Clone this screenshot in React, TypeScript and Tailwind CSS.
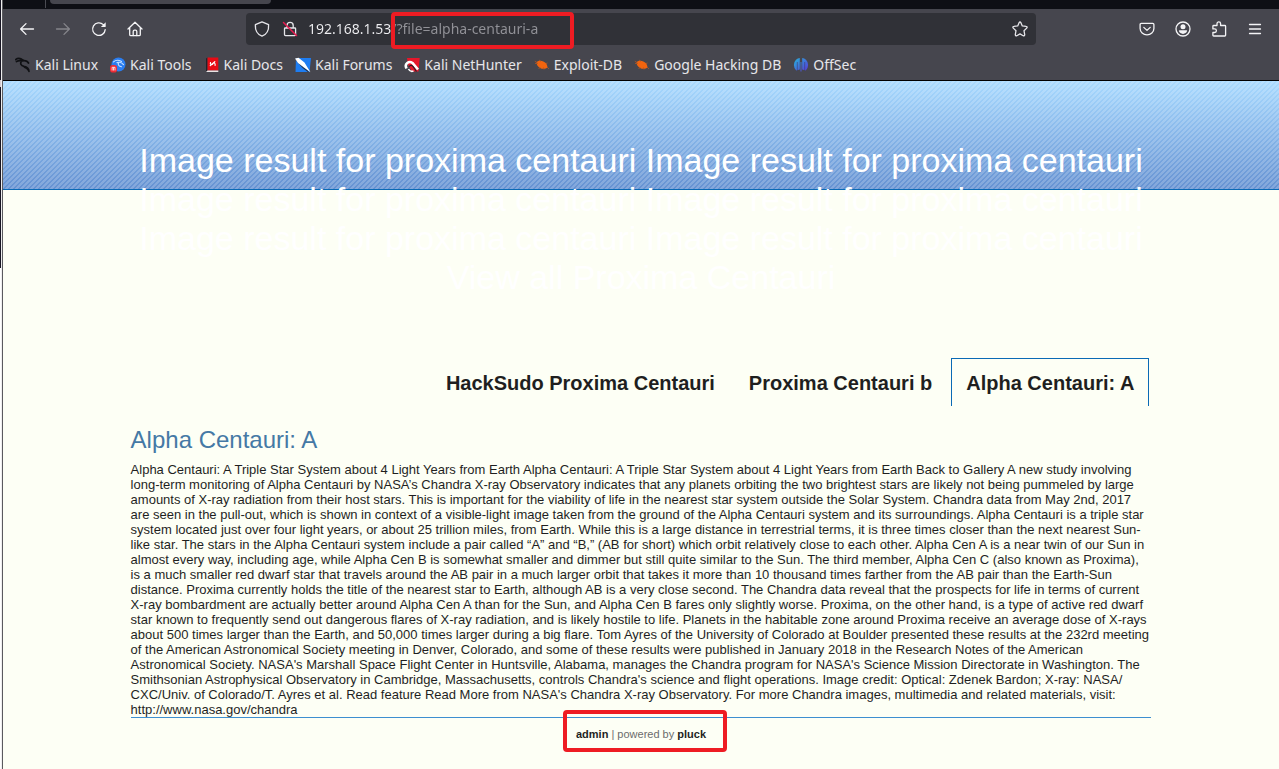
import type { ReactNode } from "react";

const iconProps = {
  width: 16,
  height: 16,
  viewBox: "0 0 16 16",
  fill: "none",
  stroke: "currentColor",
  strokeWidth: 1.3,
  strokeLinecap: "round" as const,
  strokeLinejoin: "round" as const,
  "aria-hidden": true,
};

function ToolButton({ label, dim, children }: { label: string; dim?: boolean; children: ReactNode }) {
  return (
    <button
      type="button"
      aria-label={label}
      disabled={dim}
      className={
        dim
          ? "flex h-8 w-9 shrink-0 items-center justify-center text-[#85858b]"
          : "flex h-8 w-9 shrink-0 items-center justify-center text-[#f4f4f6]"
      }
    >
      {children}
    </button>
  );
}

function BackIcon() {
  return (
    <svg {...iconProps}>
      <path d="M14.5 8H1.8M7 2.6 1.6 8 7 13.4" />
    </svg>
  );
}

function ForwardIcon() {
  return (
    <svg {...iconProps}>
      <path d="M1.5 8h12.7M9 2.6 14.4 8 9 13.4" />
    </svg>
  );
}

function ReloadIcon() {
  return (
    <svg {...iconProps}>
      <path d="M14.2 8.6A6.3 6.3 0 1 1 12.3 3.6l1 .9" />
      <path d="M14.7 1.2v4.4a.4.4 0 0 1-.4.4H9.9z" fill="currentColor" stroke="none" />
    </svg>
  );
}

function HomeIcon() {
  return (
    <svg {...iconProps}>
      <path d="M1 8 8 1.2 15 8M2.7 6.6v6.9c0 .7.5 1.2 1.2 1.2h8.2c.7 0 1.2-.5 1.2-1.2V6.6" />
      <path d="M6.2 14.5v-4c0-.8.6-1.3 1.3-1.3h1c.8 0 1.3.5 1.3 1.3v4" />
    </svg>
  );
}

function ShieldIcon() {
  return (
    <svg {...iconProps}>
      <path d="M8 .9 14.6 3.6c.3 4.6-1.2 9.5-6.6 11.6C2.6 13.1 1.1 8.2 1.4 3.6z" />
    </svg>
  );
}

function InsecureLockIcon() {
  return (
    <svg {...iconProps}>
      <path d="M5 7V4.4a3.1 3.1 0 0 1 6.2 0V7M3.2 7h9.6c.5 0 .8.3.8.8v5.8c0 .6-.4 1-1 1H3.5c-.6 0-1-.4-1-1V7.8c0-.5.3-.8.7-.8z" />
      <path d="M1.5 1.5 14.5 14.5" stroke="#e8194f" strokeWidth="1.5" />
    </svg>
  );
}

function StarIcon() {
  return (
    <svg {...iconProps}>
      <path d="M8 1c.4 0 .6.2.8.6l1.5 3.3 3.8.5c1 .1 1.3 1 .6 1.7L12 9.7l.7 3.9c.1.9-.7 1.5-1.5 1.1L8 12.9l-3.2 1.8c-.8.4-1.6-.2-1.5-1.1L4 9.7 1.3 7.1C.6 6.4.9 5.5 1.9 5.4l3.8-.5L7.2 1.6C7.4 1.2 7.6 1 8 1z" />
    </svg>
  );
}

function PocketIcon() {
  return (
    <svg {...iconProps}>
      <path d="M2.3 2.3h11.4c.7 0 1.2.5 1.2 1.2v4a6.9 6.3 0 0 1-13.8 0v-4c0-.7.5-1.2 1.2-1.2z" />
      <path d="M4.8 6.4 8 9.4l3.2-3" />
    </svg>
  );
}

function AccountIcon() {
  return (
    <svg {...iconProps}>
      <circle cx="8" cy="8" r="7" />
      <circle cx="8" cy="5.8" r="2.5" fill="currentColor" stroke="none" />
      <path
        d="M4.6 9.2h6.8c.5 0 .8.4.7.9C11.5 11.8 9.9 12.9 8 12.9s-3.5-1.100-4.100-2.800c-.1-.5.2-.9.7-.9z"
        fill="currentColor"
        stroke="none"
      />
    </svg>
  );
}

function ExtensionIcon() {
  return (
    <svg {...iconProps}>
      <path d="M6 4.500V2.700a1.800 1.800 0 0 1 3.600 0v1.800h4.200c.5 0 .8.300.8.800v8.900c0 .5-.3.800-.8.800H2.700c-.5 0-.8-.3-.8-.8v-2.700h1.700a1.800 1.800 0 0 0 0-3.600H1.900V5.300c0-.5.3-.8.8-.8z" />
    </svg>
  );
}

function MenuIcon() {
  return (
    <svg {...iconProps}>
      <path d="M2.5 3.5h11M2.5 8h11M2.5 12.5h11" />
    </svg>
  );
}

function DragonIcon() {
  return (
    <svg width="16" height="16" viewBox="0 0 16 16" aria-hidden="true">
      <path
        d="M.5 2.600C3 .9 6 1.500 8 3.200M1.500 4.500c2-1 4-1 6.500-.5M7 3.800c3-.6 5.500.2 6.500 2.200M6.500 4C4.800 6.500 6 8.700 9 9.300c3 .5 4.800 1.600 5 5.200M9.500 10.200c2 .6 3 1.500 4 3.200"
        fill="none"
        stroke="#101114"
        strokeWidth="1.7"
        strokeLinecap="round"
      />
    </svg>
  );
}

function ToolsIcon() {
  return (
    <svg width="16" height="16" viewBox="0 0 16 16" aria-hidden="true">
      <circle cx="8.5" cy="7.5" r="7" fill="#2a7df0" />
      <path
        d="M3.5 4.800C6 2.600 9 3 11.500 4.500M7 5.600c2.800-.8 5 0 6.500 2M8.500 5.800c-1 2.500 1 3.500 3 4"
        fill="none"
        stroke="#c6e1ff"
        strokeWidth="1.1"
        strokeLinecap="round"
      />
      <rect x="0" y="8" width="7" height="7.5" rx="2.8" fill="#ef2b35" />
      <path d="M2.100 13.500v-3.200h2.900v3.200M3.500 10.500v3" fill="none" stroke="#fff" strokeWidth=".8" />
    </svg>
  );
}

function DocsIcon() {
  return (
    <svg width="16" height="16" viewBox="0 0 16 16" aria-hidden="true">
      <path d="M2 1.500 3.600.5v13L2 15z" fill="#20242c" />
      <path d="M3.500.5h10.800v13H3.500z" fill="#e80a14" />
      <path d="M3.500 13.500h10.800V15H2z" fill="#e9e5e5" />
      <path
        d="M6.500 5.500c-.8 2 1.700 2.800 2.300 1.200s2.800-1 2.300 1.600M6.300 8.500l4.500-3.800"
        fill="none"
        stroke="#fff"
        strokeWidth="1.2"
        strokeLinecap="round"
      />
    </svg>
  );
}

function ForumsIcon() {
  return (
    <svg width="16" height="16" viewBox="0 0 16 16" aria-hidden="true">
      <path d="M1 1h15l-1.500 14H.5z" fill="#1e7df2" />
      <path d="M1.500 3 8 10.500l5.500 4.200" fill="none" stroke="#24324a" strokeWidth="1.2" />
      <path d="M0 1.500 3.500.8 9.500 5.500l3 5 3 4.800L9 10.500 3 6z" fill="#fff" />
    </svg>
  );
}

function NetHunterIcon() {
  return (
    <svg width="16" height="16" viewBox="0 0 16 16" aria-hidden="true">
      <path d="M3 1h12.700l-1.200 13.500H8L4 8z" fill="#e5172b" />
      <path d="M2.500 11.500C0 6.500 5 3.500 8.500 6l5.500 6.500" fill="none" stroke="#fff" strokeWidth="2.6" />
      <path d="M5 9.700c1.500-2 3-1.500 4.300.1l3.200 4.700" fill="none" stroke="#281f29" strokeWidth="1.2" />
      <path d="M4.500 12c1 2 3 2.700 5 2" fill="none" stroke="#fff" strokeWidth="1.6" />
    </svg>
  );
}

function BugIcon() {
  return (
    <svg width="16" height="16" viewBox="0 0 16 16" aria-hidden="true">
      <path
        d="M2.500 5.200c2-1.600 4.500-1.700 6.800-.7 2.700 1.200 4 3.200 4.200 5.800-1.800 2-5.200 1.900-7.500.6C3.600 9.600 2.600 7.500 2.500 5.200z"
        fill="#f1640f"
      />
      <path
        d="M1 6.500h3M4.500 12l2-2M10 12.500l-.5-2M5 3l2 1.500M12 6.500l1.500-.5M13 10l2 2M.8 4.200l2.500 1.500"
        stroke="#b5551f"
        strokeWidth=".8"
      />
    </svg>
  );
}

function OffSecIcon() {
  return (
    <svg width="16" height="16" viewBox="0 0 16 16" aria-hidden="true">
      <defs>
        <linearGradient id="offsec" x1="0" y1="0" x2="1" y2="1">
          <stop offset="0" stopColor="#25b4dc" />
          <stop offset="1" stopColor="#5a35d8" />
        </linearGradient>
      </defs>
      <path
        d="M6.800 1v11.500l-3.600.9A7.500 7.500 0 0 1 3 2.700C4.100 1.800 5.400 1.200 6.800 1zM9.200 1v11.500l3.600.9A7.500 7.500 0 0 0 13 2.700C11.900 1.800 10.600 1.200 9.200 1zM7.500 5h1v9.500h-1z"
        fill="url(#offsec)"
      />
      <path d="M4.300 5v9M11.700 5v9" stroke="#3d3c6a" strokeWidth=".6" />
    </svg>
  );
}

const bookmarks: { name: string; icon: ReactNode }[] = [
  { name: "Kali Linux", icon: <DragonIcon /> },
  { name: "Kali Tools", icon: <ToolsIcon /> },
  { name: "Kali Docs", icon: <DocsIcon /> },
  { name: "Kali Forums", icon: <ForumsIcon /> },
  { name: "Kali NetHunter", icon: <NetHunterIcon /> },
  { name: "Exploit-DB", icon: <BugIcon /> },
  { name: "Google Hacking DB", icon: <BugIcon /> },
  { name: "OffSec", icon: <OffSecIcon /> },
];

function BrowserChrome() {
  return (
    <div className="border-b border-black bg-[#46464e] font-['Noto_Sans',sans-serif] text-[#e6e6ea]">
      <div className="flex h-[9px] items-start bg-[#0e0f15]">
        <div className="h-2 w-[43px] border-r border-[#4a4b52]" />
        <div className="ml-1 h-1 w-[221px] rounded-b-sm bg-[#46464e]" />
      </div>

      <div className="flex h-10 items-center pr-1.5 pl-1.5">
        <ToolButton label="Back"><BackIcon /></ToolButton>
        <ToolButton label="Forward" dim><ForwardIcon /></ToolButton>
        <ToolButton label="Reload"><ReloadIcon /></ToolButton>
        <ToolButton label="Home"><HomeIcon /></ToolButton>
        <div className="mx-[93px] flex h-8 min-w-0 flex-1 items-center rounded bg-[#303137] pr-2 pl-2">
          <ShieldIcon />
          <span className="ml-3"><InsecureLockIcon /></span>
          <div className="relative ml-2.5 flex h-8 min-w-0 flex-1 items-center">
            <input
              aria-label="Address"
              type="text"
              defaultValue="192.168.1.53/?file=alpha-centauri-a"
              className="w-full bg-[linear-gradient(to_right,#f0f0f3_84px,#929298_84px)] bg-clip-text text-sm leading-6 text-transparent caret-white outline-none"
            />
            <div className="pointer-events-none absolute -top-px left-[83px] h-[37px] w-[183px] rounded-sm border-4 border-[#ee1c23]" />
          </div>
          <button type="button" aria-label="Bookmark this page"><StarIcon /></button>
        </div>
        <ToolButton label="Save to Pocket"><PocketIcon /></ToolButton>
        <ToolButton label="Account"><AccountIcon /></ToolButton>
        <ToolButton label="Extensions"><ExtensionIcon /></ToolButton>
        <ToolButton label="Menu"><MenuIcon /></ToolButton>
      </div>

      <nav aria-label="Bookmarks" className="flex h-[31px] items-center gap-3 pl-3">
        {bookmarks.map((item) => (
          <a key={item.name} href="#" className="flex items-center gap-1 text-sm whitespace-nowrap">
            {item.icon}
            {item.name}
          </a>
        ))}
      </nav>
    </div>
  );
}

const pages = ["HackSudo Proxima Centauri", "Proxima Centauri b", "Alpha Centauri: A"];
const siteTitle = `${"Image result for proxima centauri ".repeat(6)}View all Proxima Centauri`;

function Site() {
  return (
    <div className="flex-1 bg-[#fdfff5] font-['Liberation_Sans',Arial,sans-serif] text-[#1f1f1f]">
      <header className="relative pt-[60px]">
        <div className="absolute inset-x-0 top-0 h-[109px] border-b border-[#0a6ab5] bg-linear-to-b from-[#a8daff] to-[#6692d2]">
          <div className="h-full bg-[linear-gradient(135deg,#ffffff30_25%,transparent_25%,transparent_50%,#ffffff30_50%,#ffffff30_75%,transparent_75%)] bg-size-[5px_5px]" />
        </div>
        <h1 className="relative mx-auto w-4/5 text-center text-[34px] leading-[39px] text-white">{siteTitle}</h1>
      </header>

      <div className="mx-auto w-4/5">
        <nav aria-label="Pages" className="mt-[61px] flex justify-end gap-1 pr-0.5">
          {pages.map((page, index) => (
            <a
              key={page}
              href="#"
              aria-current={index === 2 ? "page" : undefined}
              className={
                index === 2
                  ? "border-x border-t border-[#0a6ab5] px-3.5 pt-3 pb-[11px] text-xl leading-6 font-bold"
                  : "border-x border-t border-transparent px-3.5 pt-3 pb-[11px] text-xl leading-6 font-bold"
              }
            >
              {page}
            </a>
          ))}
        </nav>

        <main className="mt-5 border-b border-[#3d8fd0]">
          <h2 className="text-2xl leading-7 text-[#4579a5]">Alpha Centauri: A</h2>
          <p className="mt-2 text-[13px] leading-[15px]">
            Alpha Centauri: A Triple Star System about 4 Light Years from Earth Alpha Centauri: A Triple Star System
            about 4 Light Years from Earth Back to Gallery A new study involving long-term monitoring of Alpha Centauri
            by NASA’s Chandra X-ray Observatory indicates that any planets orbiting the two brightest stars are likely
            not being pummeled by large amounts of X-ray radiation from their host stars. This is important for the
            viability of life in the nearest star system outside the Solar System. Chandra data from May 2nd, 2017 are
            seen in the pull-out, which is shown in context of a visible-light image taken from the ground of the Alpha
            Centauri system and its surroundings. Alpha Centauri is a triple star system located just over four light
            years, or about 25 trillion miles, from Earth. While this is a large distance in terrestrial terms, it is
            three times closer than the next nearest Sun-like star. The stars in the Alpha Centauri system include a
            pair called “A” and “B,” (AB for short) which orbit relatively close to each other. Alpha Cen A is a near
            twin of our Sun in almost every way, including age, while Alpha Cen B is somewhat smaller and dimmer but
            still quite similar to the Sun. The third member, Alpha Cen C (also known as Proxima), is a much smaller
            red dwarf star that travels around the AB pair in a much larger orbit that takes it more than 10 thousand
            times farther from the AB pair than the Earth-Sun distance. Proxima currently holds the title of the
            nearest star to Earth, although AB is a very close second. The Chandra data reveal that the prospects for
            life in terms of current X-ray bombardment are actually better around Alpha Cen A than for the Sun, and
            Alpha Cen B fares only slightly worse. Proxima, on the other hand, is a type of active red dwarf star known
            to frequently send out dangerous flares of X-ray radiation, and is likely hostile to life. Planets in the
            habitable zone around Proxima receive an average dose of X-rays about 500 times larger than the Earth, and
            50,000 times larger during a big flare. Tom Ayres of the University of Colorado at Boulder presented these
            results at the 232rd meeting of the American Astronomical Society meeting in Denver, Colorado, and some of
            these results were published in January 2018 in the Research Notes of the American Astronomical Society.
            NASA's Marshall Space Flight Center in Huntsville, Alabama, manages the Chandra program for NASA's Science
            Mission Directorate in Washington. The Smithsonian Astrophysical Observatory in Cambridge, Massachusetts,
            controls Chandra's science and flight operations. Image credit: Optical: Zdenek Bardon; X-ray: NASA/
            <wbr />
            CXC/Univ. of Colorado/T. Ayres et al. Read feature Read More from NASA's Chandra X-ray Observatory. For
            more Chandra images, multimedia and related materials, visit: http://www.nasa.gov/chandra
          </p>
        </main>

        <footer className="flex justify-center pt-2 text-[11px] leading-4 text-[#6c6c6c]">
          <p className="relative">
            <a href="#" className="font-bold text-[#1f1f1f]">admin</a> | powered by{" "}
            <a href="#" className="font-bold text-[#1f1f1f]">pluck</a>
            <span className="pointer-events-none absolute -top-4 -left-[13px] h-[42px] w-[164px] rounded-sm border-4 border-[#ee1c23]" />
          </p>
        </footer>
      </div>
    </div>
  );
}

export default function App() {
  return (
    <div className="flex min-h-screen bg-white">
      <div className="flex w-[3px] shrink-0">
        <div className="w-px bg-[linear-gradient(#181623_80px,#d8cdd3_80px,#d8cdd3_87px,#181623_87px,#181623_268px,#ffffff_268px)]" />
        <div className="w-px bg-[#eeeeee]" />
        <div className="w-px bg-[#5a5a5e]" />
      </div>
      <div className="flex min-w-0 flex-1 flex-col">
        <BrowserChrome />
        <Site />
      </div>
    </div>
  );
}
